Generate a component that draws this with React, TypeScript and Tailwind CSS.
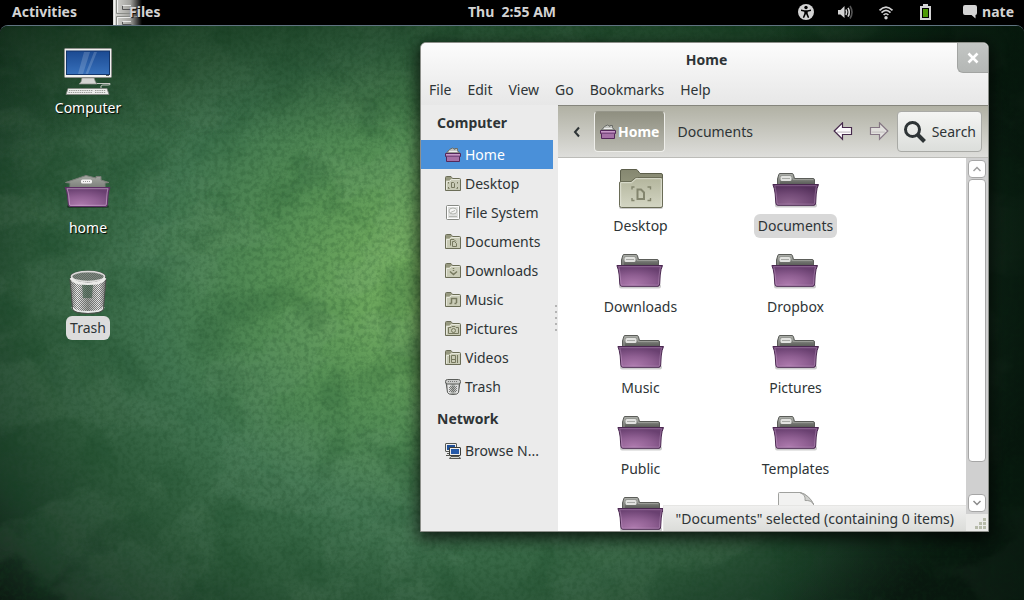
import * as React from 'react'

const Wallpaper = () => (
  <svg
    className="absolute inset-0 w-full h-full"
    viewBox="0 0 1024 576"
    preserveAspectRatio="none"
    aria-hidden="true"
  >
    <defs>
      <radialGradient id="glow" gradientUnits="userSpaceOnUse" cx="0" cy="0" r="1" gradientTransform="translate(450 255) scale(600 480)">
        <stop offset="0" stopColor="#7db766" />
        <stop offset="0.12" stopColor="#70aa5e" />
        <stop offset="0.3" stopColor="#558f55" />
        <stop offset="0.5" stopColor="#417550" />
        <stop offset="0.7" stopColor="#2c5739" />
        <stop offset="0.86" stopColor="#1c3c28" />
        <stop offset="1" stopColor="#0c1a12" />
      </radialGradient>
      <linearGradient id="shadeRight" x1="0" y1="0" x2="1" y2="0">
        <stop offset="0.75" stopColor="#04140a" stopOpacity="0" />
        <stop offset="1" stopColor="#04140a" stopOpacity="0.7" />
      </linearGradient>
      <linearGradient id="shadeTop" x1="0" y1="0" x2="0" y2="1">
        <stop offset="0" stopColor="#08240f" stopOpacity="0.45" />
        <stop offset="0.2" stopColor="#08240f" stopOpacity="0" />
      </linearGradient>
      <filter id="patch" x="0" y="0" width="100%" height="100%" colorInterpolationFilters="sRGB">
        <feTurbulence type="fractalNoise" baseFrequency="0.009 0.012" numOctaves="7" seed="8" />
        <feColorMatrix values="0 0 0 0 0.55  0 0 0 0 0.68  0 0 0 0 0.58  9 0 0 0 -4.3" />
      </filter>
      <filter id="stain" x="0" y="0" width="100%" height="100%" colorInterpolationFilters="sRGB">
        <feTurbulence type="fractalNoise" baseFrequency="0.016" numOctaves="6" seed="21" />
        <feColorMatrix values="0 0 0 0 0.06  0 0 0 0 0.25  0 0 0 0 0.12  0 6 0 0 -3.1" />
      </filter>
      <filter id="grain" x="0" y="0" width="100%" height="100%" colorInterpolationFilters="sRGB">
        <feTurbulence type="fractalNoise" baseFrequency="0.22" numOctaves="3" seed="3" />
        <feColorMatrix values="0 0 0 0 0.08  0 0 0 0 0.25  0 0 0 0 0.12  0 0 3 0 -1.2" />
      </filter>
    </defs>
    <rect width="1024" height="576" fill="url(#glow)" />
    <rect width="1024" height="576" filter="url(#patch)" opacity="0.09" />
    <rect width="1024" height="576" filter="url(#stain)" opacity="0.16" />
    <rect width="1024" height="576" filter="url(#grain)" opacity="0.2" />
    <rect width="1024" height="576" fill="url(#shadeTop)" />
    <rect width="1024" height="576" fill="url(#shadeRight)" />
  </svg>
)

/* gradients shared by all of the icons */
const IconDefs = () => (
  <svg className="absolute w-0 h-0" aria-hidden="true">
    <defs>
      <radialGradient id="purple" cx="0.35" cy="0.9" r="0.85">
        <stop offset="0" stopColor="#ac79ac" />
        <stop offset="0.5" stopColor="#8f5f92" />
        <stop offset="1" stopColor="#694070" />
      </radialGradient>
      <radialGradient id="purpleDark" cx="0.35" cy="0.9" r="0.85">
        <stop offset="0" stopColor="#8d648e" />
        <stop offset="0.5" stopColor="#744c78" />
        <stop offset="1" stopColor="#55315c" />
      </radialGradient>
      <linearGradient id="tabGray" x1="0" y1="0" x2="0" y2="1">
        <stop offset="0" stopColor="#a2a59f" />
        <stop offset="1" stopColor="#555753" />
      </linearGradient>
      <linearGradient id="roof" x1="0" y1="0" x2="0" y2="1">
        <stop offset="0" stopColor="#a5a8a2" />
        <stop offset="1" stopColor="#7b7e79" />
      </linearGradient>
      <linearGradient id="khaki" x1="0" y1="0" x2="0" y2="1">
        <stop offset="0" stopColor="#b3b59c" />
        <stop offset="1" stopColor="#d3d5c3" />
      </linearGradient>
      <linearGradient id="khakiBack" x1="0" y1="0" x2="0" y2="1">
        <stop offset="0" stopColor="#858770" />
        <stop offset="1" stopColor="#a5a78d" />
      </linearGradient>
      <linearGradient id="screen" x1="0" y1="0" x2="0" y2="1">
        <stop offset="0" stopColor="#1b4a92" />
        <stop offset="1" stopColor="#3770bb" />
      </linearGradient>
      <linearGradient id="metal" x1="0" y1="0" x2="1" y2="0">
        <stop offset="0" stopColor="#8a8a8a" />
        <stop offset="0.2" stopColor="#f0f0f0" />
        <stop offset="0.5" stopColor="#9da09c" />
        <stop offset="0.8" stopColor="#ececec" />
        <stop offset="1" stopColor="#7a7a7a" />
      </linearGradient>
      <linearGradient id="cabinet" x1="0" y1="0" x2="1" y2="0">
        <stop offset="0" stopColor="#dcdcd8" />
        <stop offset="0.6" stopColor="#a0a09c" />
        <stop offset="1" stopColor="#000" />
      </linearGradient>
      <pattern id="mesh" width="2" height="2" patternUnits="userSpaceOnUse">
        <rect width="1" height="1" fill="#5a5c59" fillOpacity="0.75" />
        <rect x="1" y="1" width="1" height="1" fill="#5a5c59" fillOpacity="0.75" />
      </pattern>
    </defs>
  </svg>
)

const Folder = ({ dark = false }: { dark?: boolean }) => (
  <svg width="48" height="48" viewBox="0 0 48 48" aria-hidden="true">
    <rect x="3" y="38" width="42" height="4.5" rx="2" fill="#000" opacity="0.2" />
    <path d="M5.5 20V14L6.8 9.5Q7 8.5 8 8.5H20Q21 8.5 21.4 9.5L22.5 13.5H41Q42.5 13.5 42.5 15V20Z" fill="url(#tabGray)" stroke="#5b5d59" />
    <path d="M7 19V14.3L8 9.6H19.8L21.3 14.6H41.4" fill="none" stroke="#b5b8b2" strokeOpacity="0.6" />
    <rect x="8.5" y="11" width="11" height="5" rx="1.5" fill="#e2e3e0" />
    <path d="M10.5 13.5H18" stroke="#6f716d" strokeDasharray="1 1" />
    <path d="M0.9 19.5H46.5Q44.8 23 44.2 29L43.7 38Q43.5 40.3 42 40.3H5.5Q4 40.3 3.8 38L3.2 29Q2.5 23 0.9 19.5Z" fill={dark ? 'url(#purpleDark)' : 'url(#purple)'} stroke="#4a2850" />
    <path d="M2.7 20.7H44.5Q43.6 24 43.2 29L42.6 37.5Q42.5 39.2 41.5 39.2H6Q5 39.2 4.9 37.5L4.2 29Q3.7 24 2.7 20.7Z" fill="none" stroke="#d7b2da" strokeOpacity="0.35" />
  </svg>
)

const HomeFolder = () => (
  <svg width="48" height="48" viewBox="0 0 48 48" aria-hidden="true">
    <rect x="3" y="37" width="42" height="3" rx="1.5" fill="#000" opacity="0.35" />
    <path d="M1.5 14.5L22 7.5L32 10V8.5H37V12L45 14.5L41 15V20H6V15Z" fill="url(#roof)" stroke="#7b7e79" />
    <rect x="17" y="11.5" width="11" height="4" rx="1.5" fill="#f4f4f2" />
    <path d="M19 13.5H26.5" stroke="#999" strokeDasharray="1 1" />
    <path d="M1 19.5H46Q44.5 22 44 28L43.5 36Q43.3 38.5 42 38.5H6Q4.5 38.5 4.3 36L3.5 28Q3 22 1 19.5Z" fill="url(#purple)" stroke="#5c3063" />
    <path d="M3 20.7H44Q43 24 42.8 28L42.3 36Q42.2 37.3 41.5 37.3H6.5Q5.6 37.3 5.5 36L4.8 28Q4.4 24 3 20.7Z" fill="none" stroke="#e2bfe4" strokeOpacity="0.5" />
  </svg>
)

const DesktopFolder = () => (
  <svg width="48" height="48" viewBox="0 0 48 48" aria-hidden="true">
    <rect x="2" y="40" width="44" height="4" rx="2" fill="#000" opacity="0.2" />
    <path d="M3.5 41V6Q3.5 4.5 5 4.5H19Q20 4.5 20.7 5.4L23 8.5H44Q45.5 8.5 45.5 10V41Z" fill="url(#khakiBack)" stroke="#5d5f4c" />
    <path d="M2.5 40.5V18Q2.5 16.5 4 16.5H14L18.5 12.8Q19.3 12.5 20.5 12.5H44Q45.5 12.5 45.5 14V40.5Q45.5 42.5 44 42.5H4.5Q2.5 42.5 2.5 40.5Z" fill="url(#khaki)" stroke="#6a6c57" />
    <path d="M3.7 41V17.7H14.5L19 13.7H44.3V41" fill="none" stroke="#e6e7db" strokeOpacity="0.8" />
    <path d="M20.5 24.5H24L27 27.5V34H20.5Z" fill="none" stroke="#83856e" strokeWidth="2" />
    <path d="M15 24.5V22H17.5M30.5 22H33.5V24.5M33.5 33V35.5H30.5M17.5 35.5H15V33" fill="none" stroke="#83856e" strokeWidth="1.4" />
  </svg>
)

const Computer = () => (
  <svg width="48" height="48" viewBox="0 0 48 48" aria-hidden="true">
    <rect x="0.5" y="0.5" width="47" height="29" rx="1" fill="#f0f0ee" stroke="#8c8e8a" />
    <rect x="2.5" y="3" width="43" height="23.5" fill="url(#screen)" stroke="#14356b" />
    <path d="M20 4H26L19 26H14ZM30 4H33L24 26H21.5Z" fill="#fff" opacity="0.17" />
    <rect x="42" y="27" width="3" height="1" fill="#60625e" />
    <path d="M18 30H30L31.5 34L33 36H15L17 34Z" fill="#d4d5d2" stroke="#8c8e8a" strokeWidth="0.7" />
    <path d="M37 40V38Q37 37 39 37H44Q47 37 46 35.5H33" fill="none" stroke="#c6c8c4" />
    <path d="M4 40.5H43L45 46.5H2Z" fill="#ededeb" stroke="#80827e" strokeWidth="0.8" />
    <path d="M5 42.5H29M31 42.5H42M4.5 44.5H28M31 44.5H42" stroke="#9a9c98" strokeWidth="1.2" strokeDasharray="1.4 0.8" />
  </svg>
)

const TrashCan = ({ className }: { className: string }) => (
  <svg className={className} viewBox="4 3 40 44" aria-hidden="true">
    <path d="M6 11L8.5 41Q9 45.5 24 45.5Q39 45.5 39.5 41L42 11Z" fill="url(#metal)" />
    <path d="M6 11L8.5 41Q9 45.5 24 45.5Q39 45.5 39.5 41L42 11Z" fill="url(#mesh)" />
    <path d="M18 17H29L28 31H19Z" fill="#294f37" opacity="0.5" />
    <path d="M8.5 40Q9 45 24 45Q39 45 39.5 40" fill="none" stroke="#e6e6e6" strokeWidth="2" />
    <path d="M6 12L8.5 42Q10 46.5 24 46.5Q38 46.5 39.5 42L42 12" fill="none" stroke="#4c4e4b" />
    <ellipse cx="24" cy="9.5" rx="17.5" ry="5.5" fill="#8c8f8b" stroke="#444" />
    <ellipse cx="24" cy="10" rx="15.5" ry="4.2" fill="#7d8a80" />
    <ellipse cx="24" cy="10" rx="15.5" ry="4.2" fill="url(#mesh)" />
    <ellipse cx="24" cy="9.5" rx="16.5" ry="5" fill="none" stroke="#dcdcda" strokeWidth="1.5" />
    <path d="M6.8 11Q10 16.8 24 16.8Q38 16.8 41.2 11" fill="none" stroke="#ebebe9" strokeWidth="2.6" />
  </svg>
)

const TrashSmall = () => (
  <svg className="shrink-0" width="16" height="16" viewBox="0 0 16 16" aria-hidden="true">
    <path d="M1 3L2.5 13.5Q3 15.5 8 15.5Q13 15.5 13.5 13.5L15 3Z" fill="url(#metal)" stroke="#5a5c59" />
    <path d="M4 7H12V13H4Z" fill="url(#mesh)" />
    <rect x="0.5" y="0.5" width="15" height="4.5" rx="2" fill="#c9cac8" stroke="#5a5c59" />
    <path d="M3 2.5H13" stroke="#777" strokeDasharray="1 1" />
  </svg>
)

const HomeSmall = () => (
  <svg className="shrink-0" width="16" height="16" viewBox="0 0 16 16" aria-hidden="true">
    <path d="M1.5 6L4.5 2.5L7.5 1L10 2.5V1.5H12.5V3.5L14.5 6Z" fill="#c3c5c0" stroke="#6a6c68" />
    <path d="M4 4.5H12" stroke="#eee" />
    <path d="M0.5 6.5H15.5V9.5H14.5V14.5H1.5V9.5H0.5Z" fill="#a571a6" stroke="#54285b" />
    <path d="M2 9.5H14" stroke="#7b4d82" />
    <path d="M1 7.5H15" stroke="#c79bc8" />
  </svg>
)

const FolderSmall = ({ children }: { children: React.ReactNode }) => (
  <svg className="shrink-0" width="16" height="16" viewBox="0 0 16 16" aria-hidden="true">
    <path d="M0.5 14.5V1.5Q0.5 0.5 1.5 0.5H6L7.5 2.5H14.5Q15.5 2.5 15.5 3.5V14.5Z" fill="#c9cbb6" stroke="#6b6d57" />
    <path d="M1 4.5V1H5.8L7 3.2H5.4L4.2 4.5Z" fill="#96987f" />
    <path d="M1.5 13.5V5.5H4.5L6.5 3.5H14.5" fill="none" stroke="#e6e7da" />
    <g fill="none" stroke="#77795f">{children}</g>
  </svg>
)

const Drive = () => (
  <svg className="shrink-0" width="16" height="16" viewBox="0 0 16 16" aria-hidden="true">
    <rect x="1.5" y="0.5" width="13" height="14" rx="1" fill="#dfe0de" stroke="#888a85" />
    <rect x="2.5" y="1.5" width="11" height="12" fill="none" stroke="#fff" />
    <ellipse cx="8" cy="6" rx="4" ry="3" fill="#f6f6f5" stroke="#b4b6b1" />
    <path d="M5.5 7.5L10 5.5M4 11.5H12" stroke="#b4b6b1" fill="none" />
  </svg>
)

const Network = () => (
  <svg className="shrink-0" width="16" height="16" viewBox="0 0 16 16" aria-hidden="true">
    <rect x="0.5" y="0.5" width="11" height="8" rx="0.5" fill="#eeeeec" stroke="#555753" />
    <rect x="2" y="2" width="8" height="5" fill="#1f4f97" />
    <path d="M2 10.5H5V12.5H1" fill="none" stroke="#555753" />
    <rect x="4.5" y="4.5" width="11" height="8" rx="0.5" fill="#eeeeec" stroke="#3c3e3a" />
    <rect x="6" y="6" width="8" height="5" fill="#2459a8" />
    <path d="M4.5 15.5L6 13.5H14L15.5 15.5Z" fill="#d3d7cf" stroke="#555753" />
  </svg>
)

const Accessibility = () => (
  <svg width="16" height="16" viewBox="0 0 16 16" aria-hidden="true">
    <circle cx="8" cy="8" r="8" fill="#d3d3d3" />
    <circle cx="8" cy="3.5" r="1.7" fill="#000" />
    <path d="M3 5.5L6.5 6.2H9.5L13 5.5V7L9.7 7.7V9.5L11.2 13.5L9.9 14L8.2 10.2H7.8L6.1 14L4.8 13.5L6.3 9.5V7.7L3 7Z" fill="#000" />
  </svg>
)

const Volume = () => (
  <svg width="16" height="16" viewBox="0 0 16 16" fill="none" aria-hidden="true">
    <path d="M0 6H2.5L6.5 2V14L2.5 10.5H0Z" fill="#d3d3d3" />
    <path d="M8 5.5Q9.4 8.2 8 11" stroke="#d3d3d3" strokeWidth="1.6" />
    <path d="M10 3.8Q12.6 8.2 10 12.7" stroke="#d3d3d3" strokeWidth="1.6" />
    <path d="M12 2Q16 8.2 12 14.5" stroke="#555" strokeWidth="1.6" />
  </svg>
)

const Wifi = () => (
  <svg width="16" height="16" viewBox="0 0 16 16" fill="none" aria-hidden="true">
    <path d="M1.5 6.3Q8 -0.2 14.5 6.3" stroke="#d3d3d3" strokeWidth="1.7" />
    <path d="M3.5 8.7Q8 4.2 12.5 8.7" stroke="#d3d3d3" strokeWidth="1.7" />
    <path d="M5.6 11Q8 8.5 10.4 11" stroke="#d3d3d3" strokeWidth="1.7" />
    <circle cx="8" cy="13.8" r="1.7" fill="#d3d3d3" />
  </svg>
)

const Battery = () => (
  <svg width="16" height="16" viewBox="0 0 16 16" aria-hidden="true">
    <path d="M2 2H5V0H10V2H13V16H2Z" fill="#d3d3d3" />
    <rect x="4" y="4" width="7" height="10" fill="#000" />
    <rect x="5" y="5" width="5" height="8" fill="#4e9a06" />
  </svg>
)

const Chat = () => (
  <svg width="16" height="16" viewBox="0 0 16 16" aria-hidden="true">
    <path d="M3 1H13Q15 1 15 3V9Q15 11 13.5 11V14.5L9.5 11H3Q1 11 1 9V3Q1 1 3 1Z" fill="#d3d3d3" />
  </svg>
)

const Cabinet = () => (
  <svg className="absolute left-0 top-0" width="29" height="25" viewBox="0 0 29 25" aria-hidden="true">
    <rect width="29" height="25" fill="url(#cabinet)" />
    <g fill="none" stroke="#8a8c87">
      <path d="M3.5 0V13.5H24M24 16.5H3.5V25" />
      <path d="M9.5 5V9.5H18.5" stroke="#555" />
      <path d="M9.5 21V24.5H18.5" stroke="#555" />
    </g>
    <path d="M9 5.5H18M9 21.5H18M1.5 0V25M4.5 0V12.5M4.5 25V17.5H20" stroke="#fff" strokeOpacity="0.7" fill="none" />
  </svg>
)

const Arrow = ({ faded = false }: { faded?: boolean }) => (
  <svg width="20" height="20" viewBox="0 0 20 20" className={faded ? '-scale-x-100 opacity-50' : ''} aria-hidden="true">
    <path d="M1.2 9L9.5 0.8V5.5H18.5V12.5H9.5V17.2Z" fill="#fdfbfd" stroke="#462a4c" strokeWidth="1.2" />
    <path d="M4 10.2L9 10.2H17.3" stroke="#d6d0d6" strokeWidth="1.8" />
  </svg>
)

const places = [
  { name: 'Home', icon: <HomeSmall />, active: true },
  {
    name: 'Desktop',
    icon: (
      <FolderSmall>
        <path d="M6.5 6.5H8.5L9.5 7.5V11.5H6.5ZM3.5 7.5V6M12.5 7.5V6M3.5 11V12.5H4.5M12.5 11V12.5H11.5" />
      </FolderSmall>
    ),
  },
  { name: 'File System', icon: <Drive /> },
  {
    name: 'Documents',
    icon: (
      <FolderSmall>
        <path d="M5.5 11.5V5.5H9L11 7.5M7.5 7.5H9.5L11.5 9.5V12.5H7.5Z" />
      </FolderSmall>
    ),
  },
  {
    name: 'Downloads',
    icon: (
      <FolderSmall>
        <path d="M8.5 5V6M8.5 7V8M5 8.5L8.5 11.5L12 8.5" strokeWidth="1.5" />
      </FolderSmall>
    ),
  },
  {
    name: 'Music',
    icon: (
      <FolderSmall>
        <path d="M6.5 11.5V6.5H11.5V11M4.5 11.5H6.5M9.5 11.5H11.5" strokeWidth="1.5" />
      </FolderSmall>
    ),
  },
  {
    name: 'Pictures',
    icon: (
      <FolderSmall>
        <path d="M3.5 6.5H6L7 5.5H10L11 6.5H13.5V12.5H3.5Z" />
        <circle cx="8.5" cy="9.5" r="2" />
      </FolderSmall>
    ),
  },
  {
    name: 'Videos',
    icon: (
      <FolderSmall>
        <path d="M4.5 5V13M12.5 5V13M6.5 5.5H10.5V12.5H6.5ZM6.5 9.5H10.5" />
      </FolderSmall>
    ),
  },
  { name: 'Trash', icon: <TrashSmall /> },
]

const folders = ['Downloads', 'Dropbox', 'Music', 'Pictures', 'Public', 'Templates']

const Place = ({ name, icon, active }: { name: string; icon: React.ReactNode; active?: boolean }) => (
  <li>
    <button
      className={
        active
          ? 'flex items-center w-full h-[29px] pl-6 gap-1 bg-[#4a90d9] text-white'
          : 'flex items-center w-full h-[29px] pl-6 gap-1'
      }
    >
      {icon}
      <span className="whitespace-nowrap">{name}</span>
    </button>
  </li>
)

const FileItem = ({ name, icon, selected }: { name?: string; icon: React.ReactNode; selected?: boolean }) => (
  <li className="h-[81px]">
    <button className="flex flex-col items-center mx-auto">
      {icon}
      {name && (
        <span className={selected ? 'mt-px px-1 h-6 leading-6 rounded-md bg-[#d8d8d8]' : 'mt-px px-1 h-6 leading-6'}>
          {name}
        </span>
      )}
    </button>
  </li>
)

const TopBar = () => (
  <header className="relative h-6 shrink-0 flex items-center justify-between bg-black text-[#d3d3d3] leading-6 font-bold">
    <div className="flex">
      <button className="pl-3 pr-9">Activities</button>
      <button className="relative pl-4">
        <Cabinet />
        <span className="relative [text-shadow:1px_1px_1px_#000]">Files</span>
      </button>
    </div>
    <button className="absolute left-1/2 -translate-x-1/2 whitespace-pre">Thu  2:55 AM</button>
    <div className="flex items-center gap-6 pr-[10px]">
      <button aria-label="Accessibility"><Accessibility /></button>
      <button aria-label="Volume"><Volume /></button>
      <button aria-label="Network"><Wifi /></button>
      <button aria-label="Battery"><Battery /></button>
      <button className="flex items-center gap-1 pl-1">
        <Chat />
        nate
      </button>
    </div>
  </header>
)

const DesktopIcons = () => (
  <ul className="relative flex flex-col items-start pl-12 pt-[23px] text-white">
    <li className="w-20 mb-12">
      <button className="flex flex-col items-center w-full">
        <Computer />
        <span className="h-6 leading-6 [text-shadow:1px_1px_1px_#000]">Computer</span>
      </button>
    </li>
    <li className="w-20 mb-7">
      <button className="flex flex-col items-center w-full">
        <HomeFolder />
        <span className="h-6 leading-6 [text-shadow:1px_1px_1px_#000]">home</span>
      </button>
    </li>
    <li className="w-20">
      <button className="flex flex-col items-center w-full">
        <TrashCan className="h-12 w-10 py-[2px]" />
        <span className="h-6 leading-6 px-1 rounded-md bg-[#dcdcdc] text-[#2e3436]">Trash</span>
      </button>
    </li>
  </ul>
)

const Sidebar = () => (
  <aside className="flex w-[137px] shrink-0 bg-[#ebebeb]">
    <div className="w-[132px]">
      <h2 className="h-[35px] leading-[35px] pl-4 font-bold">Computer</h2>
      <ul>
        {places.map((place) => (
          <Place key={place.name} {...place} />
        ))}
      </ul>
      <h2 className="h-[35px] leading-[35px] pl-4 font-bold">Network</h2>
      <ul>
        <Place name="Browse N..." icon={<Network />} />
      </ul>
    </div>
    {/* drag handle */}
    <div className="flex flex-col items-center justify-center gap-1 w-[5px]">
      {[0, 1, 2, 3, 4].map((dot) => (
        <span key={dot} className="w-[2px] h-[2px] bg-[#b4b4b4]" />
      ))}
    </div>
  </aside>
)

const Toolbar = () => (
  <div className="flex items-center h-[53px] shrink-0 pl-3 pr-[6px] border-t border-b border-t-[#85857c] border-b-[#bcbcb8] bg-linear-to-b from-[#b1b1a4] to-[#dededb]">
    <button aria-label="Scroll path" className="w-6">
      <svg width="14" height="14" viewBox="0 0 14 14" fill="none" stroke="#2e3436" strokeWidth="2" aria-hidden="true">
        <path d="M9 2.5L5 7L9 11.5" />
      </svg>
    </button>
    <button className="flex items-center h-[41px] px-[5px] rounded border border-[#eeeeea] border-t-[#96968a] bg-linear-to-b from-[#8f8f80] to-[#b9b9b0] text-white font-bold gap-[2px]">
      <HomeSmall />
      Home
    </button>
    <button className="px-3">Documents</button>
    <div className="flex items-center ml-auto gap-4">
      <button aria-label="Back"><Arrow /></button>
      <button aria-label="Forward"><Arrow faded /></button>
    </div>
    <button className="flex items-center h-[41px] ml-2 px-[5px] gap-[5px] rounded-sm border border-[#a9aaa6] bg-linear-to-b from-[#f4f5f3] to-[#dcdedb]">
      <svg width="24" height="24" viewBox="0 0 24 24" fill="none" stroke="#2e3436" aria-hidden="true">
        <circle cx="9.5" cy="9.5" r="7" strokeWidth="3" />
        <path d="M14.5 14.5L21.5 21.5" strokeWidth="4" />
      </svg>
      Search
    </button>
  </div>
)

const ScrollBar = () => (
  <div className="flex flex-col w-[22px] shrink-0 bg-[#d0d0d0]">
    <div className="flex flex-col grow gap-px px-[2px] pt-[2px] pb-[2px]">
      <button aria-label="Scroll up" className="flex items-center justify-center h-[18px] rounded border border-[#a6a6a6] bg-white">
        <svg width="10" height="10" viewBox="0 0 10 10" fill="none" stroke="#a0a0a0" strokeWidth="1.5" aria-hidden="true">
          <path d="M1.5 7L5 3.5L8.5 7" />
        </svg>
      </button>
      <div className="grow">
        <div className="h-[90%] rounded border border-[#a6a6a6] bg-white" />
      </div>
      <button aria-label="Scroll down" className="flex items-center justify-center h-[18px] rounded border border-[#a6a6a6] bg-white">
        <svg width="10" height="10" viewBox="0 0 10 10" fill="none" stroke="#8a8a8a" strokeWidth="1.5" aria-hidden="true">
          <path d="M1.5 3L5 6.5L8.5 3" />
        </svg>
      </button>
    </div>
    {/* resize grip */}
    <svg width="22" height="17" viewBox="0 0 22 17" className="bg-[#ebebe9]" fill="#b7bbaa" aria-hidden="true">
      <path d="M17 4H20V7H17ZM13 8H16V11H13ZM17 8H20V11H17ZM9 12H12V15H9ZM13 12H16V15H13ZM17 12H20V15H17Z" />
    </svg>
  </div>
)

const FileView = () => (
  <div className="flex grow min-h-0">
    <div className="relative grow overflow-hidden bg-white">
      <ul className="grid grid-cols-[repeat(auto-fill,155px)] pl-[5px] pt-[7px]">
        <FileItem name="Desktop" icon={<DesktopFolder />} />
        <FileItem name="Documents" icon={<Folder dark />} selected />
        {folders.map((name) => (
          <FileItem key={name} name={name} icon={<Folder />} />
        ))}
        <FileItem icon={<Folder />} />
        <FileItem
          icon={
            <svg width="48" height="48" viewBox="0 0 48 48" aria-hidden="true">
              <path d="M6.5 46V4.5Q6.5 3.5 7.5 3.5H28Q36 5 41.5 15V46Z" fill="#f2f2f1" stroke="#a0a19e" />
              <path d="M28 3.5Q34 6 33 11.5Q39 11 41.5 15Q37 6 28 3.5Z" fill="#cfd0cd" stroke="#a0a19e" />
            </svg>
          }
        />
      </ul>
      <p className="absolute right-0 bottom-0 h-[26px] leading-[26px] px-3 whitespace-nowrap border-t border-l border-[#e6e6e4] bg-linear-to-b from-[#f0f0ef] to-[#dbdcd9]">
        "Documents" selected (containing 0 items)
      </p>
    </div>
    <ScrollBar />
  </div>
)

const FileWindow = () => (
  <main className="absolute left-[420px] right-[35px] top-[17px] bottom-[68px] flex flex-col overflow-hidden rounded-t-md border border-[#8d8f8a] bg-[#ebebeb] shadow-[0_5px_16px_2px_rgba(0,0,0,0.75)]">
    <div className="relative shrink-0 bg-linear-to-b from-[#fcfcfc] to-[#e7e7e7]">
      <h1 className="h-[34px] leading-[34px] pl-1 text-center font-bold">Home</h1>
      <button
        aria-label="Close"
        className="absolute right-0 top-0 flex items-center justify-center w-[31px] h-[30px] rounded-bl-md border-l border-b border-[#a2a4a2] bg-linear-to-b from-[#c3c6c4] to-[#b4b7b5]"
      >
        <svg width="12" height="12" viewBox="0 0 12 12" stroke="#fff" strokeWidth="2.6" aria-hidden="true">
          <path d="M1.5 1.5L10.5 10.5M10.5 1.5L1.5 10.5" />
        </svg>
      </button>
      <nav className="flex h-7 items-center pb-[2px]">
        {['File', 'Edit', 'View', 'Go', 'Bookmarks', 'Help'].map((item) => (
          <button key={item} className="px-2">
            {item}
          </button>
        ))}
      </nav>
    </div>
    <div className="flex grow min-h-0">
      <Sidebar />
      <section className="flex flex-col grow min-w-0">
        <Toolbar />
        <FileView />
      </section>
    </div>
  </main>
)

const App = () => {
  return (
    <div className="flex flex-col h-screen overflow-hidden bg-black text-sm text-[#2e3436] font-['Noto_Sans','Open_Sans',sans-serif]">
      <IconDefs />
      <TopBar />
      <div className="relative grow mt-px">
        <div className="absolute inset-0 overflow-hidden rounded-t-lg border-t border-[#5f7380]">
          <Wallpaper />
        </div>
        <DesktopIcons />
        <FileWindow />
      </div>
    </div>
  )
}

export default App
